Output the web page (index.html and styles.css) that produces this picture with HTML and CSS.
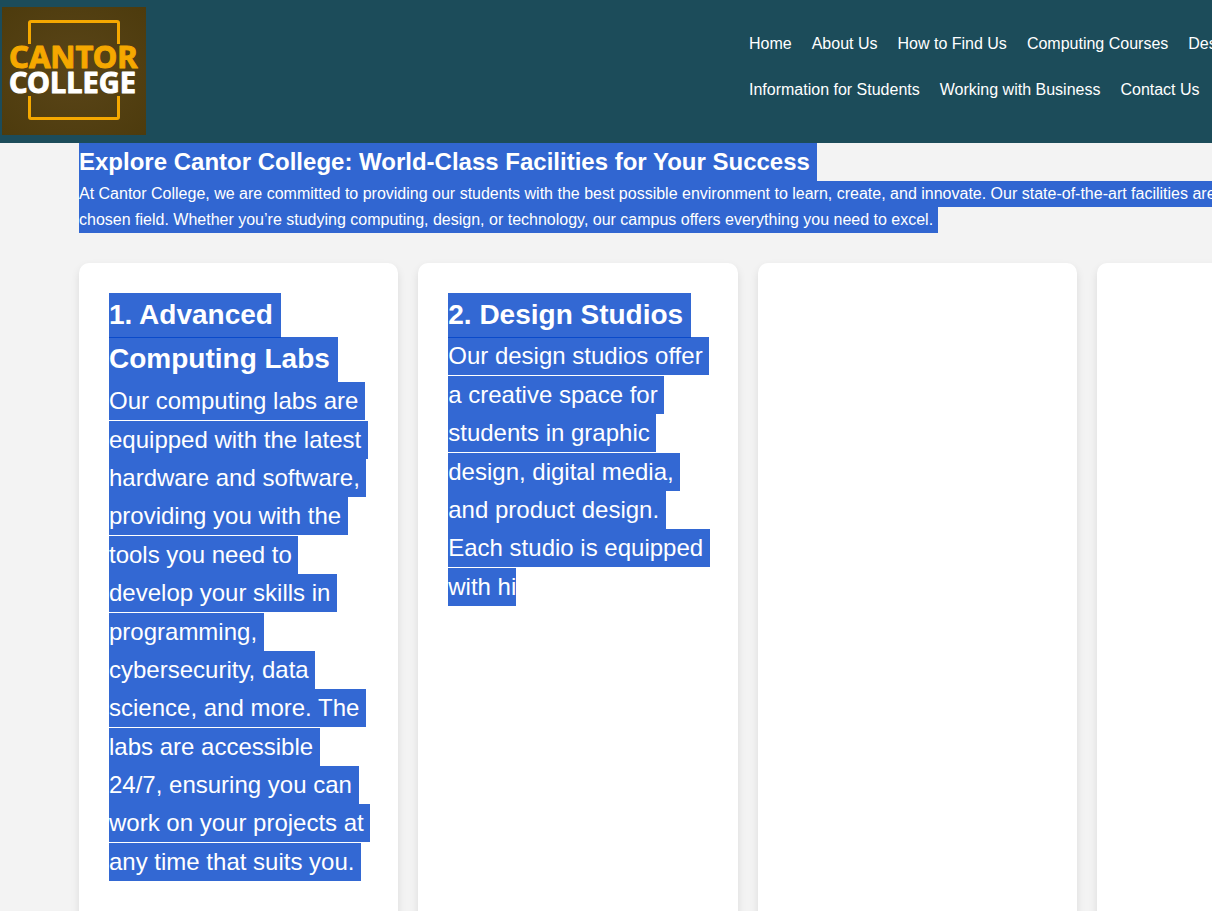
FILE: index.html
```
<!DOCTYPE html>
<html lang="en">
<head>
<meta charset="utf-8">
<title>Cantor College</title>
<link rel="stylesheet" href="styles.css">
</head>
<body>
<div class="page">
  <header class="site-header">
    <a class="logo" href="#" aria-label="Cantor College">
      <svg width="144" height="128" viewBox="0 0 144 128">
        <defs>
          <radialGradient id="glow" r="0.7">
            <stop offset="0" stop-color="#5a4518"/>
            <stop offset="1" stop-color="#4d3b0d"/>
          </radialGradient>
        </defs>
        <rect width="144" height="128" fill="url(#glow)"/>
        <path class="logo-frame" d="M27.500 37V16Q27.500 14.500 29 14.500H115Q116.500 14.500 116.500 16V37M27.500 89V110Q27.500 111.500 29 111.500H115Q116.500 111.500 116.500 110V89"/>
        <text class="logo-top" x="7" y="61">CANTOR</text>
        <text class="logo-bottom" x="7" y="86">COLLEGE</text>
      </svg>
    </a>
    <nav class="site-nav" aria-label="Main">
      <ul class="nav-list">
        <li><a href="#">Home</a></li>
        <li><a href="#">About Us</a></li>
        <li><a href="#">How to Find Us</a></li>
        <li><a href="#">Computing Courses</a></li>
        <li><a href="#">Design Courses</a></li>
        <li><a href="#">Information for Students</a></li>
        <li><a href="#">Working with Business</a></li>
        <li><a href="#">Contact Us</a></li>
      </ul>
    </nav>
  </header>
  <main class="facilities">
    <h2 class="title" id="title">Explore Cantor College: World-Class Facilities for Your Success</h2>
    <p class="intro">At Cantor College, we are committed to providing our students with the best possible environment to learn, create, and innovate. Our state-of-the-art facilities are<br>chosen field. Whether you’re studying computing, design, or technology, our campus offers everything you need to excel.</p>
    <div class="cards">
      <article class="card">
        <h3 class="card-title">1. Advanced Computing Labs</h3>
        <p class="card-text">Our computing labs are equipped with the latest hardware and software, providing you with the tools you need to develop your skills in programming, cybersecurity, data science, and more. The labs are accessible 24/7, ensuring you can work on your projects at any time that suits you.</p>
      </article>
      <article class="card">
        <h3 class="card-title">2. Design Studios</h3>
        <p class="card-text" id="typing">Our design studios offer a creative space for students in graphic design, digital media, and product design. Each studio is equipped with hi</p>
      </article>
      <article class="card"></article>
      <article class="card"></article>
    </div>
  </main>
</div>
<script src="script.js"></script>
</body>
</html>
```
FILE: styles.css
```
* {
  box-sizing: border-box;
  margin: 0;
  padding: 0;
}

html {
  height: 100%;
  overflow: hidden;
}

body {
  height: 100%;
  overflow: hidden;
  background: #f3f3f3;
  color: #ffffff;
  font-family: "Liberation Sans", Arial, sans-serif;
  font-size: 16px;
  line-height: 1.6;
}

::selection {
  background: rgba(0, 66, 200, 0.8);
  color: #ffffff;
}

.page {
  min-width: 1496px;
}

.site-header {
  display: flex;
  justify-content: space-between;
  align-items: flex-start;
  padding: 7px 0 8px 2px;
  background: #1c4c5a;
}

.logo,
.logo svg {
  display: block;
}

.logo-frame {
  fill: none;
  stroke: #f5a800;
  stroke-width: 3;
}

.logo-top,
.logo-bottom {
  font-family: "Noto Sans", sans-serif;
  font-weight: 700;
  stroke-width: 1;
  stroke-linejoin: round;
}

.logo-top {
  font-size: 31px;
  fill: #f5a800;
  stroke: #f5a800;
}

.logo-bottom {
  font-size: 29px;
  fill: #ffffff;
  stroke: #ffffff;
}

.site-nav {
  width: 50%;
  padding-top: 24px;
}

.nav-list {
  display: flex;
  flex-wrap: wrap;
  gap: 20px;
  padding-right: 100px;
  list-style: none;
}

.nav-list a {
  color: #ffffff;
  text-decoration: none;
}

.facilities {
  padding: 0 80px 0 79px;
}

.title {
  font-size: 24px;
}

.cards {
  display: grid;
  grid-template-columns: repeat(4, 1fr);
  gap: 20px;
  margin-top: 30px;
}

.card {
  min-height: 700px;
  padding: 30px;
  border-radius: 10px;
  background: #ffffff;
  box-shadow: 0 4px 8px rgba(0, 0, 0, 0.1);
}

.card-title {
  font-size: 28px;
}

.card-text {
  font-size: 24px;
}
```
FILE: script.js
```
// Select everything from the page title to the end of the second card.
const first = document.getElementById("title").firstChild;
const last = document.getElementById("typing").firstChild;
window.getSelection().setBaseAndExtent(first, 0, last, last.length);
```
